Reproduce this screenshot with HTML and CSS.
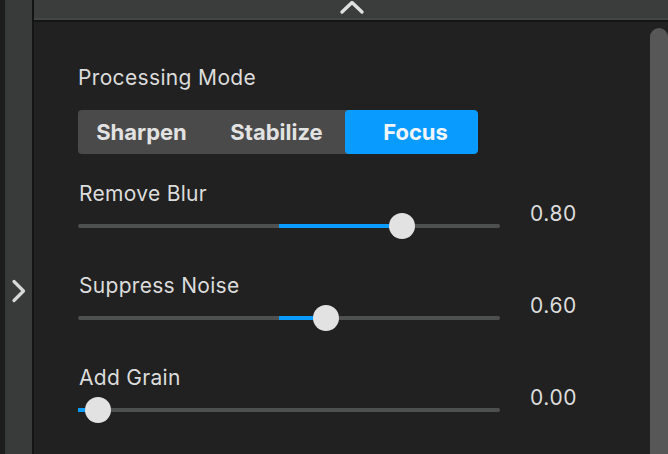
FILE: index.html
```html
<!DOCTYPE html>
<html>
<head>
<meta charset="utf-8">
<link rel="stylesheet" href="styles.css">
</head>
<body>
<div class="app">
  <div class="side">
    <div class="side-edge"></div>
    <div class="side-strip">
      <svg class="chev-right" width="18" height="26" viewBox="0 0 18 26"><path d="M4 3.5 L13.5 13 L4 22.5" fill="none" stroke="#d8d8d8" stroke-width="3.2" stroke-linecap="round" stroke-linejoin="round"/></svg>
    </div>
    <div class="side-border"></div>
  </div>
  <div class="main">
    <div class="topbar">
      <svg class="chev-up" width="26" height="16" viewBox="0 0 26 16"><path d="M3 13 L13 3.5 L23 13" fill="none" stroke="#e0e0e0" stroke-width="3.4" stroke-linecap="round" stroke-linejoin="round"/></svg>
    </div>
    <div class="body">
      <div class="content">
        <div class="title">Processing Mode</div>
        <div class="seg">
          <div class="seg-item first">Sharpen</div>
          <div class="seg-item mid">Stabilize</div>
          <div class="seg-item active">Focus</div>
        </div>
        <div class="param">
          <div class="param-label">Remove Blur</div>
          <div class="param-row">
            <div class="track">
              <div class="fill" style="left:47.6%;width:29.1%"></div>
              <div class="thumb" style="left:76.7%"></div>
            </div>
            <div class="value">0.80</div>
          </div>
        </div>
        <div class="param">
          <div class="param-label">Suppress Noise</div>
          <div class="param-row">
            <div class="track">
              <div class="fill" style="left:47.6%;width:11.1%"></div>
              <div class="thumb" style="left:58.7%"></div>
            </div>
            <div class="value">0.60</div>
          </div>
        </div>
        <div class="param">
          <div class="param-label">Add Grain</div>
          <div class="param-row">
            <div class="track">
              <div class="fill" style="left:0;width:4.7%"></div>
              <div class="thumb" style="left:4.7%"></div>
            </div>
            <div class="value">0.00</div>
          </div>
        </div>
      </div>
      <div class="scroll-col">
        <div class="scroll-thumb"></div>
      </div>
    </div>
  </div>
</div>
</body>
</html>
```
FILE: styles.css
```css
html, body {
  margin: 0;
  padding: 0;
  width: 668px;
  height: 454px;
  overflow: hidden;
  background: #212121;
  font-family: Inter, "Noto Sans", sans-serif;
}
.app {
  display: flex;
  width: 668px;
  height: 454px;
}
.side {
  display: flex;
  width: 34px;
  flex: none;
}
.side-edge {
  width: 5px;
  background: #1d1d1d;
}
.side-strip {
  width: 27px;
  background: #393a3a;
  display: flex;
  align-items: center;
  justify-content: center;
  padding-top: 128px;
  box-sizing: border-box;
}
.side-border {
  width: 2px;
  background: #141414;
}
.main {
  flex: 1;
  display: flex;
  flex-direction: column;
}
.topbar {
  height: 18px;
  background: #3b3d3d;
  border-bottom: 2px solid #444646;
  box-shadow: 0 2px 0 #151515;
  display: flex;
  justify-content: center;
  align-items: flex-start;
  position: relative;
  z-index: 1;
}
.chev-up {
  margin-top: -1px;
  margin-left: 2px;
}
.body {
  flex: 1;
  display: flex;
  padding-top: 3px;
}
.content {
  flex: 1;
  padding-left: 44px;
  padding-top: 43px;
}
.title {
  color: #dcdcdc;
  font-size: 21px;
  line-height: 24px;
  height: 24px;
  letter-spacing: 0.35px;
}
.seg {
  margin-top: 20px;
  width: 400px;
  height: 44px;
  display: flex;
  background: #4a4a4a;
  border-radius: 4px;
  overflow: hidden;
}
.seg-item {
  flex: none;
  width: 133px;
  box-sizing: border-box;
  display: flex;
  align-items: center;
  justify-content: center;
  color: #e2e2e2;
  font-weight: 700;
  font-size: 22px;
}
.seg-item.first {
  padding-right: 6px;
}
.seg-item.mid {
  width: 134px;
  padding-right: 3px;
}
.seg-item.active {
  background: #0a9bff;
  color: #f2f6fa;
  border-radius: 4px;
  padding-left: 8px;
}
.param {
  margin-top: 28px;
}
.param + .param {
  margin-top: 34px;
}
.param-label {
  color: #dcdcdc;
  font-size: 21px;
  line-height: 24px;
  height: 24px;
  padding-left: 1px;
  letter-spacing: 0.3px;
}
.param-row {
  display: flex;
  align-items: center;
  height: 28px;
  margin-top: 6px;
}
.track {
  position: relative;
  width: 422px;
  height: 4px;
  background: #4e5050;
  border-radius: 2px;
}
.fill {
  position: absolute;
  top: 0;
  height: 4px;
  background: #0a9bff;
}
.thumb {
  position: absolute;
  top: 50%;
  width: 26px;
  height: 26px;
  margin-left: -13px;
  margin-top: -13px;
  border-radius: 50%;
  background: #e2e2e2;
}
.value {
  align-self: flex-start;
  color: #dcdcdc;
  font-size: 21px;
  line-height: 24px;
  letter-spacing: 0.6px;
  margin-left: 30px;
  margin-top: -10px;
}
.scroll-col {
  width: 18px;
  padding-top: 5px;
  display: flex;
}
.scroll-thumb {
  flex: 1;
  background: #575757;
  border-radius: 9px 9px 0 0;
}
```
